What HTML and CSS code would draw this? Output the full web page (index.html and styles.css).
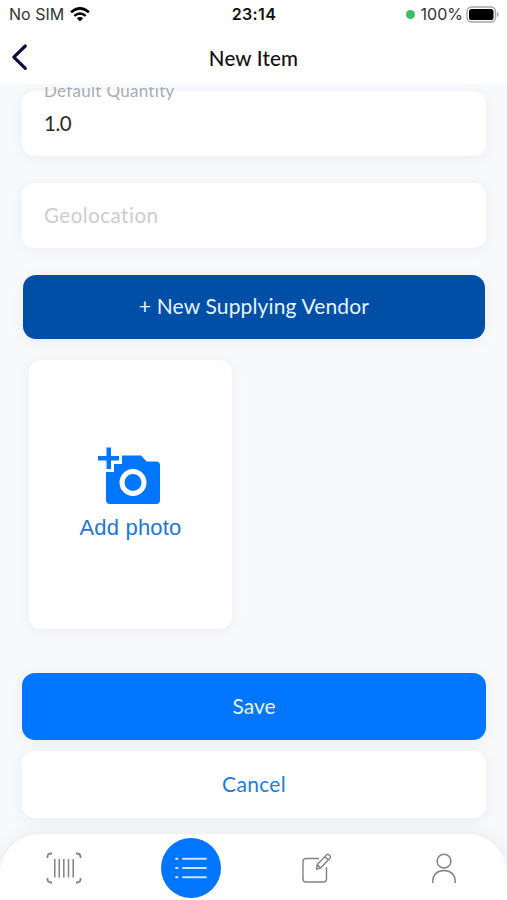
FILE: index.html
```html
<!DOCTYPE html>
<html lang="en">
<head>
    <meta charset="UTF-8">
    <meta name="viewport" content="width=device-width, initial-scale=1.0">
    <title>New Item</title>
    <link rel="stylesheet" href="styles.css">
</head>
<body>
    <div class="status-bar">
        <div class="status-left">
            <span class="carrier">No SIM</span>
            <svg class="wifi" width="20" height="15" viewBox="0 0 20 15">
                <g fill="none" stroke="#000" stroke-width="2.5">
                    <path d="M1 5.3Q10-2.6 19 5.3"/>
                    <path d="M4.3 8.9Q10 4.1 15.7 8.9"/>
                </g>
                <path d="M6.9 11.2Q10 8.8 13.1 11.2L10 14.5z"/>
            </svg>
        </div>
        <span class="time">23:14</span>
        <div class="status-right">
            <span class="dot"></span>
            <span class="percent">100%</span>
            <svg width="33" height="17" viewBox="0 0 33 17">
                <rect x="1" y="1" width="28.5" height="15" rx="4.5" fill="#fff" stroke="#a5a5a5" stroke-width="1.4"/>
                <rect x="3" y="3" width="24.5" height="11" rx="2.6"/>
                <path d="M31 6v5q1.6-.7 1.6-2.5T31 6z" fill="#a5a5a5"/>
            </svg>
        </div>
    </div>

    <header>
        <a class="back" href="#" aria-label="Back">
            <svg width="18" height="28" viewBox="0 0 18 28">
                <path d="M14.3 3L2.8 14.2 14.3 25.4" fill="none" stroke="#0b0c42" stroke-width="3.2" stroke-linecap="round" stroke-linejoin="round"/>
            </svg>
        </a>
        <h1>New Item</h1>
    </header>

    <main>
        <div class="field">
            <span class="field-label">Default Quantity</span>
            <span class="field-value">1.0</span>
        </div>
        <div class="field">
            <span class="placeholder">Geolocation</span>
        </div>
        <button class="btn btn-vendor"><span>+ New Supplying Vendor</span></button>
        <div class="photo-card">
            <svg width="68" height="60" viewBox="0 0 68 60">
                <path fill="#0075fd" d="M9.500 1.500h4.500v8.500h8v4.500h-8V23H9.500v-8.500H1V10h8.500z"/>
                <path fill="#0075fd" d="M25 9.500h19l5.500 6H59q4 0 4 4V54q0 4-4 4H13q-4 0-4-4V26h8v-8h8z"/>
                <circle cx="36" cy="36.500" r="11" fill="#0075fd" stroke="#fff" stroke-width="5"/>
            </svg>
            <span class="photo-text">Add photo</span>
        </div>
        <button class="btn btn-save"><span>Save</span></button>
        <button class="btn btn-cancel"><span>Cancel</span></button>
    </main>

    <nav class="tab-bar">
        <a class="tab" href="#">
            <svg width="36" height="32" viewBox="0 0 36 32" fill="none" stroke="#818389">
                <path stroke-width="1.8" d="M1.500 6V5q0-3.500 3.500-3.500h1M30 1.500h1q3.500 0 3.500 3.500v1M34.500 26v1q0 3.500-3.500 3.500h-1M6 30.500H5q-3.500 0-3.500-3.500v-1"/>
                <path stroke-width="1.500" d="M8.800 7v18.500M13.300 7v18.500M17.800 7v18.500M22.500 7v18.500M27.200 7v18.500"/>
            </svg>
        </a>
        <a class="tab" href="#">
            <span class="tab-active">
                <svg width="34" height="24" viewBox="0 0 34 24" fill="none" stroke="#c8e6ff" stroke-width="1.9" stroke-linecap="round">
                    <path d="M2 2.700h1.600M2 12h1.600M2 21.300h1.600M9 2.700h23M9 12h23M9 21.300h23"/>
                </svg>
            </span>
        </a>
        <a class="tab" href="#">
            <svg width="30" height="30" viewBox="0 0 30 30" fill="none" stroke="#818389" stroke-width="1.400" stroke-linejoin="round">
                <path d="M17 5.500H4q-3 0-3 3V26q0 3 3 3h17.500q3 0 3-3V14"/>
                <path d="M14.500 16.200l.7-4.800L24.800 1.800q1-.9 2 0l1.300 1.300q.9 1 0 2L18.600 15zM15.200 11.400l3.400 3.600M23 3.700l3.300 3.300"/>
            </svg>
        </a>
        <a class="tab" href="#">
            <svg width="26" height="31" viewBox="0 0 26 31" fill="none" stroke="#818389" stroke-width="1.500">
                <circle cx="13" cy="8.200" r="6.900"/>
                <path d="M1.800 30v-1.500C1.800 21.500 6.500 17.500 13 17.500s11.200 4 11.200 11V30"/>
            </svg>
        </a>
    </nav>
</body>
</html>
```

FILE: styles.css
```css
* {
    box-sizing: border-box;
}

body {
    font-family: Lato, "Open Sans", sans-serif;
    margin: 0;
    height: 900px;
    display: flex;
    flex-direction: column;
    overflow: hidden;
    background-color: #f8f9fb;
    color: #111;
}

.status-bar {
    display: grid;
    grid-template-columns: 1fr auto 1fr;
    align-items: center;
    height: 30px;
    padding: 0 8px 2px 9px;
    background-color: #fff;
    font-family: Inter, sans-serif;
    font-size: 16px;
}

.status-left, .status-right {
    display: flex;
    align-items: center;
}

.status-left {
    gap: 6px;
}

.status-right {
    justify-content: flex-end;
    gap: 3px;
}

.carrier, .percent {
    color: #333;
}

.time {
    font-weight: 600;
    letter-spacing: 0.4px;
}

.dot {
    width: 9px;
    height: 9px;
    margin-right: 3px;
    border-radius: 50%;
    background-color: #3dbd62;
}

header {
    display: grid;
    grid-template-columns: 1fr auto 1fr;
    align-items: center;
    height: 54px;
    padding: 0 11px;
    background-color: #fff;
}

.back {
    display: flex;
}

h1 {
    margin: 1px 0 0;
    font-size: 20.5px;
    font-weight: 500;
    letter-spacing: 0.2px;
}

main {
    flex: 1;
    margin-top: 3px;
    padding: 4px 21px 0 22px;
    overflow: hidden;
}

.field {
    position: relative;
    display: flex;
    align-items: center;
    height: 65px;
    margin-bottom: 27px;
    padding: 0 22px 2px;
    border-radius: 13px;
    background-color: #fff;
    box-shadow: 0 2px 14px rgba(40,50,80,0.06);
    font-size: 20.5px;
}

/* floating label sits across the top edge of the field */
.field-label {
    position: absolute;
    top: -11px;
    left: 22px;
    line-height: 22px;
    font-size: 17px;
    letter-spacing: 0.3px;
    color: #a9acb3;
}

.field-value {
    color: #2b2b2b;
    letter-spacing: -0.5px;
}

.placeholder {
    color: #cbcccf;
    letter-spacing: 0.5px;
}

.btn {
    display: flex;
    align-items: center;
    justify-content: center;
    width: 100%;
    height: 67px;
    padding: 0 0 3px;
    border: none;
    border-radius: 13px;
    font-family: inherit;
    font-size: 21px;
    box-shadow: 0 2px 14px rgba(40,50,80,0.07);
}

.btn-vendor {
    width: 462px;
    height: 64px;
    margin: 0 0 21px 1px;
    background-color: #004fa6;
    color: #e6f4ff;
    letter-spacing: 0.15px;
}

.photo-card {
    display: flex;
    flex-direction: column;
    align-items: center;
    width: 203px;
    height: 269px;
    margin: 0 0 44px 7px;
    padding-top: 86px;
    border-radius: 13px;
    background-color: #fff;
    box-shadow: 0 2px 14px rgba(40,50,80,0.06);
}

.photo-text {
    margin-top: 9px;
    font-family: "Liberation Sans", Arial, sans-serif;
    font-size: 22px;
    line-height: 25px;
    letter-spacing: 0.2px;
    color: #2477d0;
}

.btn-save {
    margin-bottom: 11px;
    background-color: #0075fd;
    color: #e3f5ff;
}

.btn-cancel {
    background-color: #fff;
    color: #247bdc;
    letter-spacing: 0.3px;
}

.tab-bar {
    display: grid;
    grid-template-columns: repeat(4, 1fr);
    height: 66px;
    padding: 2px 0 0 1px;
    border-radius: 40px 40px 0 0;
    background-color: #fff;
    box-shadow: 0 -2px 16px rgba(40,50,80,0.07);
}

.tab {
    display: flex;
    align-items: center;
    justify-content: center;
}

.tab-active {
    display: flex;
    align-items: center;
    justify-content: center;
    width: 60px;
    height: 60px;
    border-radius: 50%;
    background-color: #0075fd;
}
```
